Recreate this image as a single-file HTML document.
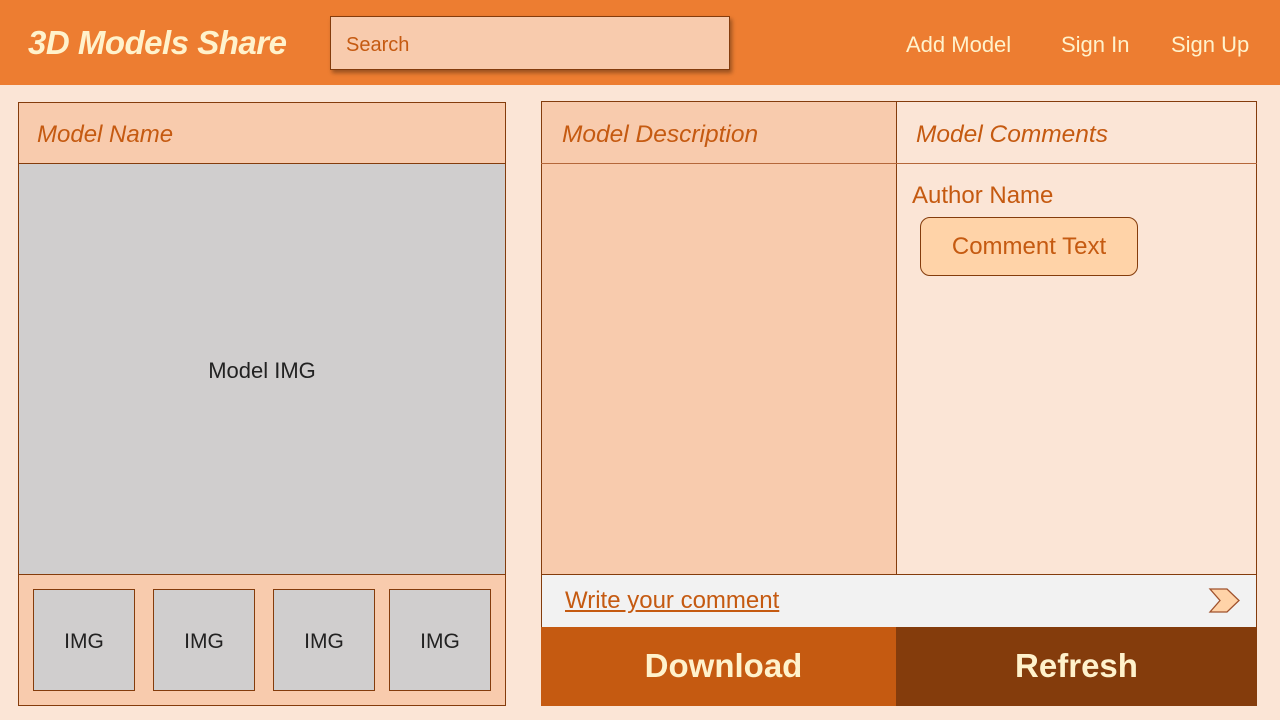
<!DOCTYPE html>
<html><head><meta charset="utf-8"><style>
*{margin:0;padding:0;box-sizing:border-box}
body{width:1280px;height:720px;background:#FBE5D6;position:relative;overflow:hidden;font-family:"Liberation Sans",sans-serif;color:#C55A11}
.a{position:absolute}
.hd{left:0;top:0;width:1280px;height:85px;background:#ED7D31}
.logo{left:28px;top:24px;font-size:33px;font-weight:bold;font-style:italic;color:#FFF2CC;letter-spacing:-0.5px}
.search{left:330px;top:16px;width:400px;height:54px;background:#F8CBAD;border:1.5px solid #843C0C;box-shadow:2px 3px 4px rgba(0,0,0,.35);font-size:20px;padding:17px 0 0 15px;color:#C55A11}
.nav{top:32px;font-size:22px;color:#FFF2CC}
.b{border:1.3px solid #843C0C}
.it{font-style:italic;font-size:24px}
.img{background:#D0CECE;color:#222;font-size:21px;display:flex;align-items:center;justify-content:center;padding-top:3px}
</style></head><body>
<div class="a hd"></div>
<div class="a logo">3D Models Share</div>
<div class="a search">Search</div>
<div class="a nav" style="left:906px">Add Model</div>
<div class="a nav" style="left:1061px">Sign In</div>
<div class="a nav" style="left:1171px">Sign Up</div>

<div class="a b" style="left:18px;top:102px;width:488px;height:604px;background:#F8CBAD"></div>
<div class="a it" style="left:37px;top:121px">Model Name</div>
<div class="a img b" style="left:18px;top:163px;width:488px;height:412px;font-size:22px">Model IMG</div>
<div class="a img b" style="left:33px;top:589px;width:102px;height:102px">IMG</div>
<div class="a img b" style="left:153px;top:589px;width:102px;height:102px">IMG</div>
<div class="a img b" style="left:273px;top:589px;width:102px;height:102px">IMG</div>
<div class="a img b" style="left:389px;top:589px;width:102px;height:102px">IMG</div>

<div class="a b" style="left:541px;top:101px;width:716px;height:605px;background:#FBE5D6"></div>
<div class="a b" style="left:541px;top:101px;width:356px;height:474px;background:#F8CBAD"></div>
<div class="a" style="left:541px;top:163px;width:716px;height:1px;background:#B5673A"></div>
<div class="a it" style="left:562px;top:121px;font-size:24.5px">Model Description</div>
<div class="a it" style="left:916px;top:121px;font-size:24.5px">Model Comments</div>
<div class="a" style="left:912px;top:182px;font-size:24px">Author Name</div>
<div class="a" style="left:920px;top:217px;width:218px;height:59px;background:#FFD3A8;border:1.3px solid #843C0C;border-radius:10px;font-size:24px;text-align:center;line-height:58px">Comment Text</div>
<div class="a b" style="left:541px;top:574px;width:716px;height:54px;background:#F2F2F2"></div>
<div class="a" style="left:565px;top:587px;font-size:24px;text-decoration:underline">Write your comment</div>
<svg class="a" style="left:1208px;top:587px" width="34" height="28"><path d="M2 2H19L31 13.5L19 25H2L12 13.5Z" fill="#FFD3A8" stroke="#A0522D" stroke-width="1.3"/></svg>
<div class="a" style="left:541px;top:627px;width:365px;height:79px;background:#C55A11;color:#FFF2CC;font-size:33px;font-weight:bold;text-align:center;line-height:78px">Download</div>
<div class="a" style="left:896px;top:627px;width:361px;height:79px;background:#843C0C;color:#FFF2CC;font-size:33px;font-weight:bold;text-align:center;line-height:78px">Refresh</div>
</body></html>
